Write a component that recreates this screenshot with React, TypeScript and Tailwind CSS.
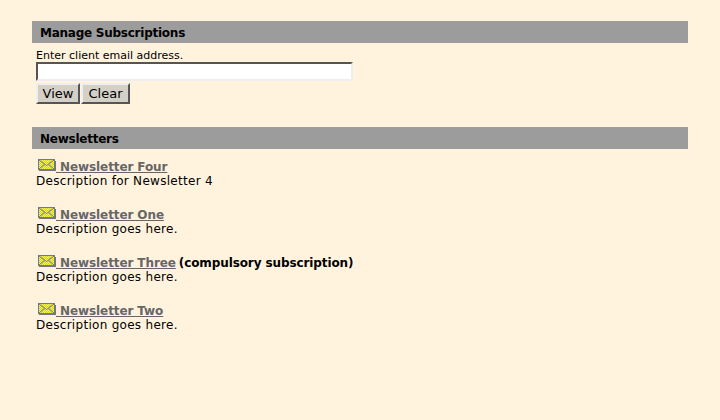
const NEWSLETTERS = [
  { name: "Newsletter Four", desc: "Description for Newsletter 4" },
  { name: "Newsletter One", desc: "Description goes here." },
  { name: "Newsletter Three", desc: "Description goes here.", note: "(compulsory subscription)" },
  { name: "Newsletter Two", desc: "Description goes here." },
];

function Envelope({ id }: { id: string }) {
  return (
    <svg width="18" height="13" viewBox="0 0 18 13" className="shrink-0" shapeRendering="crispEdges">
      <defs>
        <pattern id={id} width="2" height="2" patternUnits="userSpaceOnUse">
          <rect width="2" height="2" fill="#ffff00" />
          <rect width="1" height="1" fill="#c8c880" />
          <rect x="1" y="1" width="1" height="1" fill="#c8c880" />
        </pattern>
      </defs>
      <rect x="0.5" y="0.5" width="16" height="10" fill={`url(#${id})`} stroke="#77778c" />
      <path d="M1 1l7.5 5.5L16 1M1 10l5.5-4.5M16 10l-5.5-4.5" fill="none" stroke="#77778c" shapeRendering="auto" />
      <path d="M1 11.5h16.5V2" fill="none" stroke="#777" />
    </svg>
  );
}

function Heading({ children }: { children: string }) {
  return <h2 className="h-[22px] bg-[#9c9c9c] pt-px pl-2 text-[12px] leading-[22px] font-bold tracking-[-0.25px] text-black">{children}</h2>;
}

export default function App() {
  return (
    <div className="h-[420px] w-[720px] overflow-hidden bg-[#fff3dd] px-8 pt-[21px] font-['DejaVu_Sans',sans-serif] text-[12px] text-black">
      <Heading>Manage Subscriptions</Heading>
      <div className="pl-1">
        <div className="mt-[6px] text-[11px] leading-[13px]">Enter client email address.</div>
        <input className="block h-[19px] w-[317px] border-2 border-t-[#555] border-r-[#eee] border-b-[#eee] border-l-[#555] bg-white" />
        <div className="mt-[2px] flex gap-px">
          <button className="h-[21px] w-[44px] border-2 border-t-[#eee] border-r-[#555] border-b-[#555] border-l-[#eee] bg-[#d4d0c8] text-[13px] leading-none">View</button>
          <button className="h-[21px] w-[49px] border-2 border-t-[#eee] border-r-[#555] border-b-[#555] border-l-[#eee] bg-[#d4d0c8] text-[13px] leading-none">Clear</button>
        </div>
      </div>
      <div className="mt-[23px]">
        <Heading>Newsletters</Heading>
      </div>
      <div className="mt-[10px] flex flex-col gap-[19px] pl-1">
        {NEWSLETTERS.map((n, i) => (
          <div key={n.name} className="leading-[14px] tracking-[0.29px]">
            <div className="flex items-start pl-[2px]">
              <Envelope id={`dither${i}`} />
              <a href="#" className="mt-[1px] font-bold tracking-[-0.1px] whitespace-pre text-[#666] underline"> {n.name}</a>
              {n.note && <span className="mt-[1px] pl-[3px] font-bold tracking-[-0.1px]">{n.note}</span>}
            </div>
            <div>{n.desc}</div>
          </div>
        ))}
      </div>
    </div>
  );
}
